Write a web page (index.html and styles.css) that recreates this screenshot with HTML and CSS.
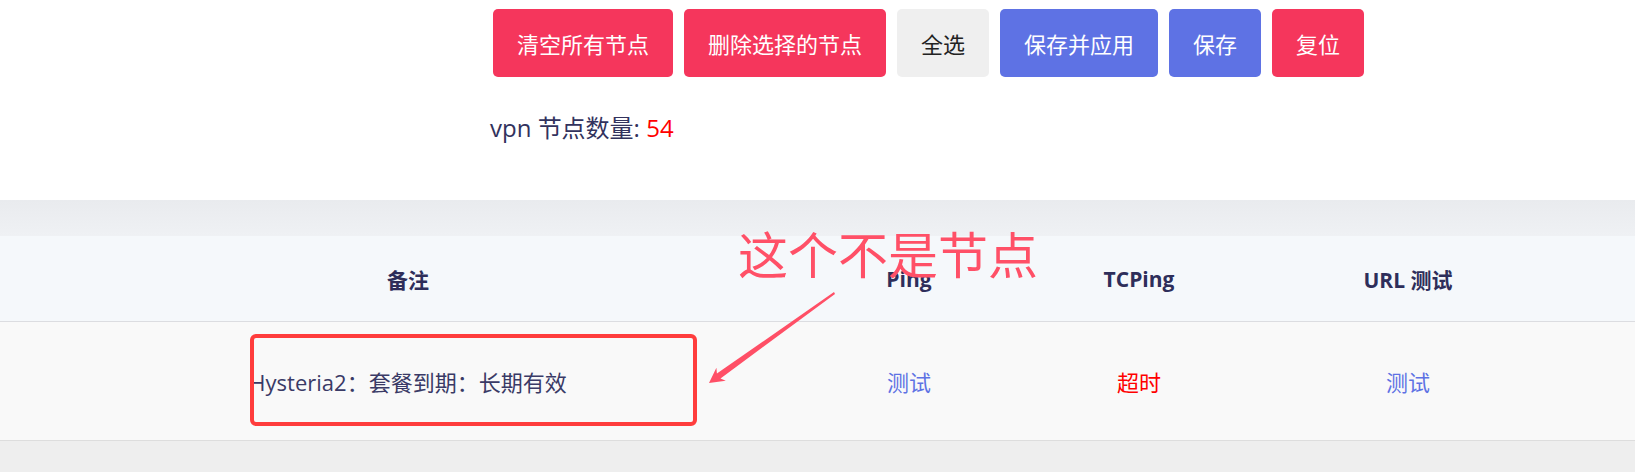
FILE: index.html
```html
<!DOCTYPE html>
<html lang="zh-CN">
<head>
<meta charset="utf-8">
<title>节点列表</title>
<link rel="stylesheet" href="styles.css">
</head>
<body>
  <section class="panel">
    <div class="actions">
      <button class="btn btn-danger">清空所有节点</button>
      <button class="btn btn-danger">删除选择的节点</button>
      <button class="btn btn-light">全选</button>
      <button class="btn btn-primary">保存并应用</button>
      <button class="btn btn-primary">保存</button>
      <button class="btn btn-danger">复位</button>
    </div>
    <p class="count">vpn 节点数量: <span class="count-num">54</span></p>
  </section>
  <div class="band"></div>
  <div class="table">
    <div class="thead">
      <div class="cell">备注</div>
      <div class="cell">Ping</div>
      <div class="cell">TCPing</div>
      <div class="cell">URL 测试</div>
      <div class="cell"></div>
    </div>
    <div class="trow">
      <div class="cell remark">Hysteria2：套餐到期：长期有效</div>
      <div class="cell link">测试</div>
      <div class="cell timeout">超时</div>
      <div class="cell link">测试</div>
      <div class="cell"></div>
    </div>
  </div>

  <div class="anno-text">这个不是节点</div>
  <div class="anno-box"></div>
  <svg class="anno-arrow" width="1635" height="472" viewBox="0 0 1635 472">
    <polygon points="834,292 835,294 720.5,378.4 725.8,380.7 709,383 716.4,367.7 716.9,373.6" fill="#ff4f66"/>
  </svg>
</body>
</html>
```

FILE: styles.css
```css
html, body {
  margin: 0;
  padding: 0;
}

body {
  position: relative;
  width: 1635px;
  height: 472px;
  overflow: hidden;
  background: #eeeeee;
  font-family: "Open Sans", "Noto Sans CJK SC", sans-serif;
  color: #32325d;
}

.panel {
  background: #ffffff;
  height: 200px;
  box-sizing: border-box;
  padding: 9px 0 0 493px;
}

.actions {
  display: flex;
  gap: 11px;
}

.btn {
  height: 68px;
  padding: 0 24px;
  border: 0;
  border-radius: 5px;
  font-family: "Noto Sans CJK SC", sans-serif;
  font-size: 22px;
  color: #ffffff;
  display: flex;
  align-items: center;
}

.btn-danger {
  background: #f5365c;
}

.btn-primary {
  background: #5e72e4;
}

.btn-light {
  background: #efefef;
  color: #222222;
}

.count {
  margin: 35px 0 0 -3px;
  font-size: 24px;
  line-height: 32px;
  color: #32325d;
}

.count-num {
  color: #ff0000;
}

.band {
  height: 36px;
  background: linear-gradient(#e9ebee, #eff1f4);
}

.thead,
.trow {
  display: grid;
  grid-template-columns: 816px 186px 274px 264px 1fr;
  align-items: center;
}

.thead {
  height: 85px;
  background: #f5f8fb;
  border-bottom: 1px solid #dcdde1;
  font-size: 21px;
  font-weight: 700;
  color: #2e2e5a;
}

.trow {
  height: 118px;
  background: #f9f9f9;
  border-bottom: 1px solid #dddddd;
  font-size: 22px;
}

.cell {
  text-align: center;
}

.remark {
  color: #3a3a66;
}

.link {
  color: #5e72e4;
}

.timeout {
  color: #ff0000;
}

.anno-text {
  position: absolute;
  left: 738px;
  top: 227px;
  font-family: "Noto Sans CJK SC", sans-serif;
  font-size: 50px;
  line-height: 50px;
  color: #ff5067;
  white-space: nowrap;
}

.anno-box {
  position: absolute;
  left: 250px;
  top: 334px;
  width: 447px;
  height: 92px;
  box-sizing: border-box;
  border: 4px solid #ff3d3d;
  border-radius: 6px;
}

.anno-arrow {
  position: absolute;
  left: 0;
  top: 0;
  pointer-events: none;
}
```
